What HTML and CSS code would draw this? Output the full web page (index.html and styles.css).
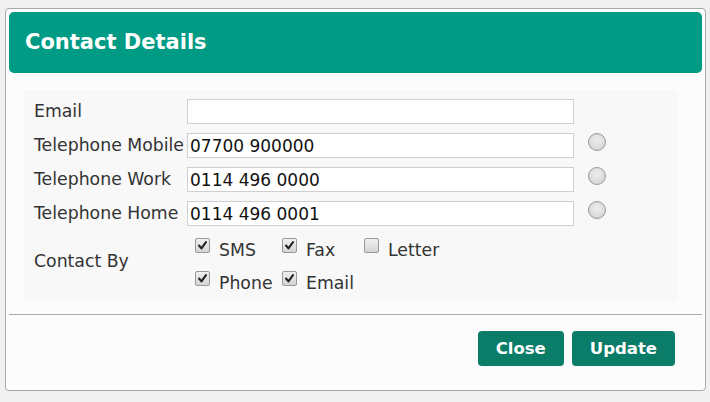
FILE: index.html
```html
<!DOCTYPE html>
<html lang="en">
<head>
<meta charset="utf-8">
<title>Contact Details</title>
<link rel="stylesheet" href="styles.css">
</head>
<body>
<div class="dialog">
  <div class="header"><h1 class="title">Contact Details</h1></div>
  <div class="panel">
    <label class="label">Email</label>
    <input class="field" type="text" value="">
    <span class="cell"></span>

    <label class="label">Telephone Mobile</label>
    <input class="field" type="text" value="07700 900000">
    <span class="cell"><span class="radio"></span></span>

    <label class="label">Telephone Work</label>
    <input class="field" type="text" value="0114 496 0000">
    <span class="cell"><span class="radio"></span></span>

    <label class="label">Telephone Home</label>
    <input class="field" type="text" value="0114 496 0001">
    <span class="cell"><span class="radio"></span></span>

    <span class="label label-contact">Contact By</span>
    <div class="checks">
      <div class="check"><span class="box on"><svg viewBox="0 0 15 15"><path d="M3.5 7.5 L6.3 10.8 L11.5 3.5" /></svg></span><span class="check-text">SMS</span></div>
      <div class="check"><span class="box on"><svg viewBox="0 0 15 15"><path d="M3.5 7.5 L6.3 10.8 L11.5 3.5" /></svg></span><span class="check-text">Fax</span></div>
      <div class="check"><span class="box"></span><span class="check-text">Letter</span></div>
      <div class="check"><span class="box on"><svg viewBox="0 0 15 15"><path d="M3.5 7.5 L6.3 10.8 L11.5 3.5" /></svg></span><span class="check-text">Phone</span></div>
      <div class="check"><span class="box on"><svg viewBox="0 0 15 15"><path d="M3.5 7.5 L6.3 10.8 L11.5 3.5" /></svg></span><span class="check-text">Email</span></div>
    </div>
  </div>
  <div class="separator"></div>
  <div class="footer">
    <button class="btn" type="button">Close</button>
    <button class="btn" type="button">Update</button>
  </div>
</div>
</body>
</html>
```
FILE: styles.css
```css
html, body {
  margin: 0;
  height: 402px;
  overflow: hidden;
}
body {
  background: #f0f0f0;
  padding: 8px 4px 0 5px;
  box-sizing: border-box;
  font-family: "DejaVu Sans", Verdana, sans-serif;
  color: #333;
}
.dialog {
  box-sizing: border-box;
  width: 701px;
  height: 383px;
  border: 1px solid #a8a8a8;
  border-radius: 4px;
  background: #fcfcfc;
  padding: 3px 3px 0 3px;
  display: flex;
  flex-direction: column;
}
.header {
  height: 61px;
  background: #009b84;
  border-radius: 5px;
  padding-left: 16px;
  display: flex;
  align-items: center;
}
.title {
  margin: 0;
  color: #fff;
  font-size: 21px;
  font-weight: bold;
  line-height: 1;
}
.panel {
  margin: 17px 25px 0 15px;
  background: #f8f8f8;
  padding: 9px 0 7px 10px;
  display: grid;
  grid-template-columns: 153px 387px 32px;
  grid-auto-rows: 25px;
  row-gap: 9px;
}
.label {
  font-size: 17.3px;
  line-height: 25px;
  color: #333;
  white-space: nowrap;
}
.field {
  box-sizing: border-box;
  height: 25px;
  width: 387px;
  margin: 0;
  border: 1px solid #cfcfcf;
  background: #fff;
  padding: 1px 2px 0 2px;
  font-family: "DejaVu Sans", Verdana, sans-serif;
  font-size: 17px;
  color: #111;
  outline: none;
}
.cell {
  display: flex;
  justify-content: flex-end;
  align-items: flex-start;
}
.radio {
  box-sizing: border-box;
  width: 18px;
  height: 18px;
  border-radius: 50%;
  border: 1px solid #999;
  background: radial-gradient(circle at 50% 40%, #eeeeee 0%, #d8d8d8 70%, #cccccc 100%);
}
.label-contact {
  grid-row: span 2;
  align-self: center;
  margin-top: -6px;
}
.checks {
  grid-column: 2 / 4;
  grid-row: span 2;
  margin-top: -6px;
  display: grid;
  grid-template-columns: 87px 82px auto;
  grid-template-rows: 33px 33px;
  padding-left: 8px;
}
.check {
  display: flex;
  align-items: flex-start;
}
.box {
  box-sizing: border-box;
  width: 15px;
  height: 15px;
  margin-top: 9px;
  border: 1px solid #999;
  border-radius: 2px;
  background: linear-gradient(#f0f0f0, #d4d4d4);
  display: flex;
}
.box svg {
  width: 13px;
  height: 13px;
}
.box path {
  fill: none;
  stroke: #222;
  stroke-width: 2.4;
  stroke-linecap: round;
  stroke-linejoin: round;
}
.check-text {
  margin-left: 9px;
  margin-top: 11px;
  font-size: 17.3px;
  line-height: 20px;
  color: #333;
}
.separator {
  height: 1px;
  background: #ababab;
  margin: 13px 0 0 0;
}
.footer {
  display: flex;
  justify-content: flex-end;
  gap: 8px;
  padding: 16px 27px 0 0;
}
.btn {
  height: 35px;
  padding: 0 18px;
  border: none;
  border-radius: 4px;
  background: #0a7c68;
  color: #fff;
  font-family: "DejaVu Sans", Verdana, sans-serif;
  font-size: 16.5px;
  font-weight: bold;
}
```
